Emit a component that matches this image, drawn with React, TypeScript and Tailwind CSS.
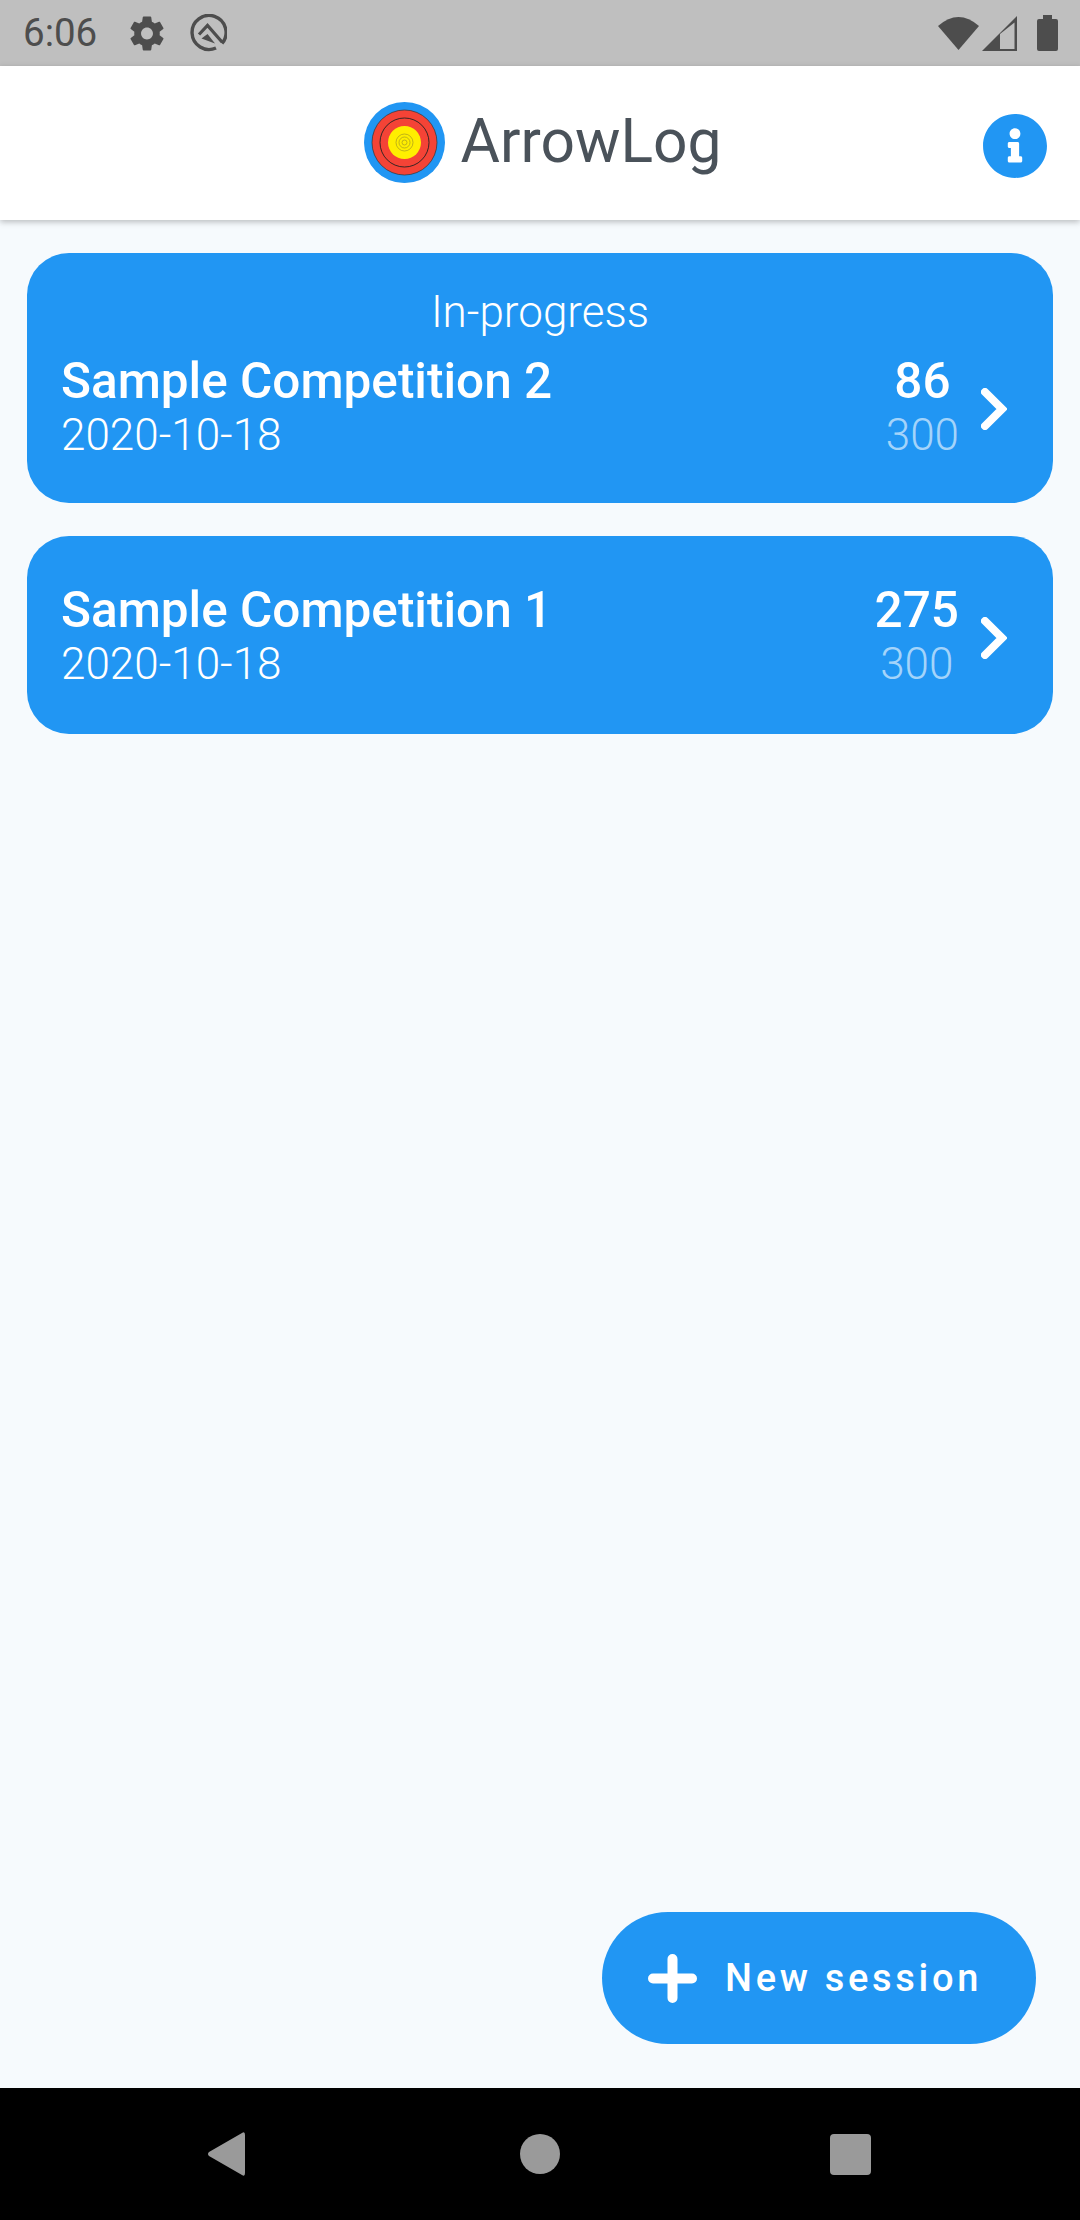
import React from "react";
import { FaInfoCircle } from "react-icons/fa";

const font = { fontFamily: "Roboto, sans-serif" };

const Target = () => (
  <svg viewBox="0 0 81 81" className="w-[81px] h-[81px] mt-[1px]">
    <circle cx="40.5" cy="41" r="40" fill="#000" opacity="0.12" />
    <circle cx="40.5" cy="40.5" r="40.5" fill="#2196f3" />
    <circle cx="40.5" cy="40.5" r="32.5" fill="#f44336" stroke="#333" strokeWidth="0.7" />
    <circle cx="40.5" cy="40.5" r="24.5" fill="#f44336" stroke="#222" strokeWidth="0.9" />
    <circle cx="40.5" cy="40.5" r="16.5" fill="#ffee00" />
    <circle cx="40.5" cy="40.5" r="8.5" fill="none" stroke="#a59a20" strokeWidth="0.7" />
    <circle cx="40.5" cy="40.5" r="5.5" fill="none" stroke="#a59a20" strokeWidth="0.7" />
    <circle cx="40.5" cy="40.5" r="2.5" fill="none" stroke="#a59a20" strokeWidth="0.7" />
  </svg>
);

const Chevron = () => (
  <svg viewBox="0 0 26 42" className="w-[26px] h-[42px] shrink-0 mt-[6px]" fill="none" stroke="#fff" strokeWidth="8" strokeLinecap="round" strokeLinejoin="miter">
    <path d="M4 4 L21 21 L4 38" />
  </svg>
);

const Card = ({ title, date, score, total, status }: { title: string; date: string; score: string; total: string; status?: string }) => (
  <div className={`bg-[#2196f3] rounded-[42px] px-[34px] text-white ${status ? "h-[250px] pt-[33px]" : "h-[198px] pt-[45px]"}`}>
    {status && <div className="text-center font-light text-[44px] leading-[52px] mb-[14px]">{status}</div>}
    <div className="flex items-center">
      <div className="flex-1">
        <div className="font-medium text-[49.5px] leading-[58px]">{title}</div>
        <div className="font-light text-[44px] leading-[50px]">{date}</div>
      </div>
      <div className="flex flex-col items-center mr-[22px]">
        <div className="font-medium text-[49.5px] leading-[58px]">{score}</div>
        <div className="font-light text-[44px] leading-[50px] text-white/60">{total}</div>
      </div>
      <Chevron />
      <div className="w-[12px]" />
    </div>
  </div>
);

export default function App() {
  return (
    <div className="relative w-[1080px] h-[2220px] flex flex-col bg-[#f6fafd] overflow-hidden" style={font}>
      {/* Status bar */}
      <div className="h-[66px] bg-[#bfbfbf] flex items-center pl-[23px] pr-[22px] text-[#4d4d4d] shrink-0">
        <span className="text-[38.5px] leading-none w-[107px]">6:06</span>
        <svg viewBox="2 2 20 20" className="w-[34px] h-[35px] fill-[#4d4d4d]">
          <path d="M19.43 12.98c.04-.32.07-.64.07-.98s-.03-.66-.07-.98l2.11-1.65c.19-.15.24-.42.12-.64l-2-3.46c-.12-.22-.39-.3-.61-.22l-2.49 1c-.52-.4-1.08-.73-1.69-.98l-.38-2.65C14.46 2.18 14.25 2 14 2h-4c-.25 0-.46.18-.49.42l-.38 2.65c-.61.25-1.17.59-1.69.98l-2.49-1c-.23-.09-.49 0-.61.22l-2 3.46c-.13.22-.07.49.12.64l2.11 1.65c-.04.32-.07.65-.07.98s.03.66.07.98l-2.11 1.65c-.19.15-.24.42-.12.64l2 3.46c.12.22.39.3.61.22l2.49-1c.52.4 1.08.73 1.69.98l.38 2.65c.03.24.24.42.49.42h4c.25 0 .46-.18.49-.42l.38-2.65c.61-.25 1.17-.59 1.69-.98l2.49 1c.23.09.49 0 .61-.22l2-3.46c.12-.22.07-.49-.12-.64l-2.11-1.65zM12 15.5c-1.93 0-3.5-1.57-3.5-3.5s1.57-3.5 3.5-3.5 3.5 1.57 3.5 3.5-1.57 3.5-3.5 3.5z" />
        </svg>
        <svg viewBox="0 0 38 38" className="w-[38px] h-[38px] ml-[25px]" fill="none" stroke="#4d4d4d">
          <path d="M27 34 A17 17 0 1 1 33 29.5" strokeWidth="3.4" />
          <path d="M10 20.5 L18.5 11.5 L33 28" strokeWidth="3.2" />
          <path d="M12.5 24.5 L18.5 20 L26 29.5 Z" fill="#4d4d4d" stroke="none" />
        </svg>
        <div className="flex-1" />
        <svg viewBox="0 0 41 34" className="w-[41px] h-[34px] fill-[#4d4d4d]">
          <path d="M20.5 34 L0 10 Q20.5 -8 41 10 Z" />
        </svg>
        <svg viewBox="0 0 35 35" className="w-[35px] h-[35px] ml-[3px]">
          <path d="M35 0 V35 H0 Z" fill="#4d4d4d" />
          <path d="M18 33 V18 L32.5 6.5 V33 Z" fill="#bfbfbf" />
        </svg>
        <svg viewBox="0 0 21 36" className="w-[21px] h-[36px] ml-[20px] fill-[#4d4d4d]">
          <path d="M6 0 H15 V4 H19 Q21 4 21 6 V34 Q21 36 19 36 H2 Q0 36 0 34 V6 Q0 4 2 4 H6 Z" />
        </svg>
      </div>

      {/* Header */}
      <div className="relative h-[154px] bg-white shrink-0 flex items-center justify-center shadow-[0_2px_6px_rgba(0,0,0,0.25)]">
        <div className="flex items-center gap-[16px] mr-[-5px] mt-[-2px]">
          <Target />
          <span className="text-[60.5px] leading-none text-[#4a525a]">ArrowLog</span>
        </div>
        <FaInfoCircle className="absolute left-[982px] top-[47px] w-[66px] h-[66px] text-[#2196f3]" />
      </div>

      {/* Sessions */}
      <div className="flex-1 px-[27px] pt-[33px] flex flex-col gap-[33px]">
        <Card status="In-progress" title="Sample Competition 2" date="2020-10-18" score="86" total="300" />
        <Card title="Sample Competition 1" date="2020-10-18" score="275" total="300" />
      </div>

      {/* New session button */}
      <button className="absolute left-[602px] top-[1912px] w-[434px] h-[132px] rounded-full bg-[#2196f3] text-white flex items-center pl-[46px]">
        <svg viewBox="0 0 49 49" className="w-[49px] h-[49px]" stroke="#fff" strokeWidth="10" strokeLinecap="round">
          <path d="M24.5 5 V44 M5 24.5 H44" />
        </svg>
        <span className="ml-[28px] text-[38px] leading-none font-medium tracking-[3.7px]">New session</span>
      </button>

      {/* Nav bar */}
      <div className="h-[132px] bg-black shrink-0 flex items-center justify-between pl-[207px] pr-[209px]">
        <svg viewBox="0 0 39 46" className="w-[39px] h-[46px]">
          <path d="M35 2 Q38 0 38 4 V42 Q38 46 35 44 L2 25 Q0 23 2 21 Z" fill="#9a9a9a" />
        </svg>
        <div className="w-[40px] h-[40px] ml-[4px] rounded-full bg-[#9a9a9a]" />
        <div className="w-[41px] h-[41px] rounded-[4px] bg-[#9a9a9a]" />
      </div>
    </div>
  );
}
